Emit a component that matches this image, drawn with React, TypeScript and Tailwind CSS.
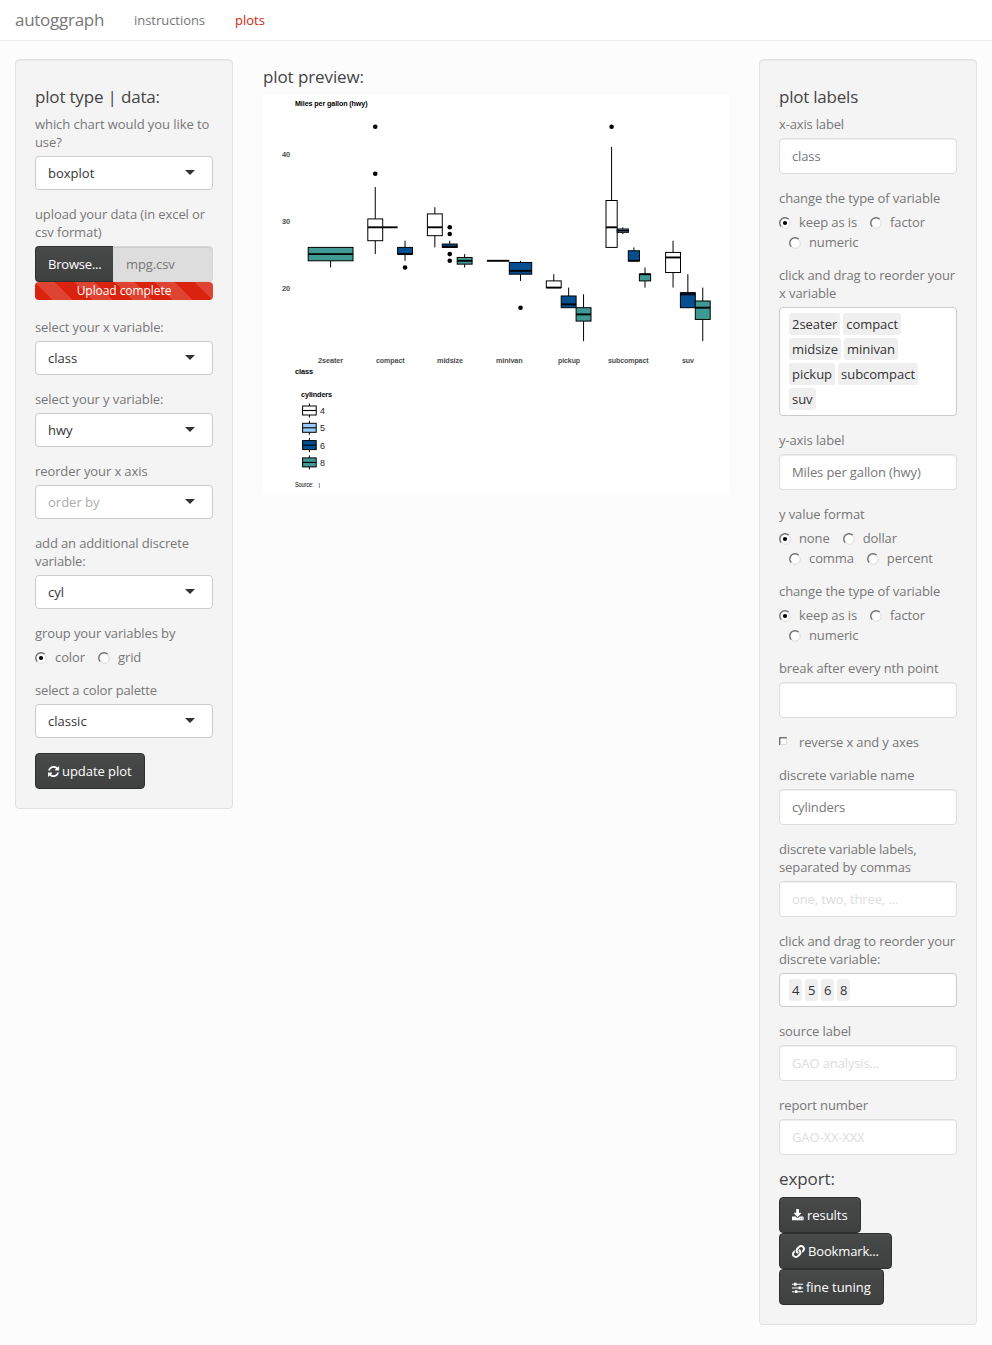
import type { ReactNode } from "react";
import { FaLink } from "react-icons/fa";

type Box = {
  x: number;
  w: number;
  min: number;
  q1: number;
  med: number;
  q3: number;
  max: number;
  fill: string;
  out?: number[];
};

const WHITE = "#ffffff";
const LIGHT = "#99ccff";
const BLUE = "#044f91";
const TEAL = "#409993";

const boxes: Box[] = [
  { x: 45.2, w: 44.8, min: 23, q1: 24, med: 25, q3: 26, max: 26, fill: TEAL },
  { x: 104.8, w: 14.9, min: 25, q1: 27, med: 29, q3: 30.25, max: 35, fill: WHITE, out: [37, 44] },
  { x: 119.7, w: 14.9, min: 29, q1: 29, med: 29, q3: 29, max: 29, fill: LIGHT },
  { x: 134.6, w: 14.9, min: 24, q1: 25, med: 25, q3: 26, max: 27, fill: BLUE, out: [23] },
  { x: 164.4, w: 14.9, min: 26, q1: 27.75, med: 29, q3: 31, max: 32, fill: WHITE },
  { x: 179.3, w: 14.9, min: 26, q1: 26, med: 26.1, q3: 26.5, max: 27, fill: BLUE, out: [24, 25, 28, 29] },
  { x: 194.2, w: 14.9, min: 23, q1: 23.5, med: 24, q3: 24.5, max: 25, fill: TEAL },
  { x: 223.9, w: 22.4, min: 24, q1: 24, med: 24, q3: 24, max: 24, fill: WHITE },
  { x: 246.3, w: 22.4, min: 21, q1: 22, med: 22.5, q3: 23.75, max: 24, fill: BLUE, out: [17] },
  { x: 283.3, w: 14.9, min: 20, q1: 20, med: 20, q3: 21, max: 22, fill: WHITE },
  { x: 298.2, w: 14.9, min: 17, q1: 17, med: 17.5, q3: 18.75, max: 20, fill: BLUE },
  { x: 313.1, w: 14.9, min: 12, q1: 15, med: 16, q3: 17, max: 19, fill: TEAL },
  { x: 343, w: 11.2, min: 26, q1: 26, med: 29, q3: 33, max: 41, fill: WHITE, out: [44] },
  { x: 354.2, w: 11.2, min: 28, q1: 28.25, med: 28.5, q3: 28.75, max: 29, fill: LIGHT },
  { x: 365.3, w: 11.2, min: 24, q1: 24, med: 24, q3: 25.5, max: 26, fill: BLUE },
  { x: 376.4, w: 11.2, min: 20, q1: 21, med: 22, q3: 22, max: 23, fill: TEAL },
  { x: 402.6, w: 14.9, min: 20, q1: 22.25, med: 24.5, q3: 25.25, max: 27, fill: WHITE },
  { x: 417.4, w: 14.9, min: 17, q1: 17, med: 19, q3: 19.25, max: 22, fill: BLUE },
  { x: 432.3, w: 14.9, min: 12, q1: 15.25, med: 17, q3: 18, max: 20, fill: TEAL },
];

const y = (v: number) => 132.3 - (v - 29) * 6.7;

const classes: [string, number, number][] = [
  ["2seater", 55, 25],
  ["compact", 113, 28.5],
  ["midsize", 174, 26],
  ["minivan", 233, 26.5],
  ["pickup", 295, 22],
  ["subcompact", 345, 40.5],
  ["suv", 419, 12],
];

const legend: [string, string][] = [
  ["4", WHITE],
  ["5", LIGHT],
  ["6", BLUE],
  ["8", TEAL],
];

function BoxPlot() {
  return (
    <svg width="466" height="400" viewBox="0 0 466 400" className="block bg-white" fontFamily="Liberation Sans, sans-serif">
      <text x="32" y="11" fontSize="7.2" fontWeight="bold" textLength="72.5" lengthAdjust="spacingAndGlyphs">Miles per gallon (hwy)</text>
      {[40, 30, 20].map((v) => (
        <text key={v} x="19" y={y(v) + 3.6} fontSize="6.6" fontWeight="bold" fill="#4d4d4d" textLength="8" lengthAdjust="spacingAndGlyphs">{v}</text>
      ))}
      {boxes.map((b, i) => {
        const cx = b.x + b.w / 2;
        return (
          <g key={i} stroke="#000" strokeWidth="1">
            {b.max > b.q3 && <path d={`M${cx} ${y(b.q3)}V${y(b.max)}`} />}
            {b.min < b.q1 && <path d={`M${cx} ${y(b.q1)}V${y(b.min)}`} />}
            <rect x={b.x} y={y(b.q3)} width={b.w} height={y(b.q1) - y(b.q3)} fill={b.fill} />
            <path d={`M${b.x} ${y(b.med)}h${b.w}`} strokeWidth="1.9" />
            {b.out?.map((o) => <circle key={o} cx={cx} cy={y(o)} r="2.3" stroke="none" />)}
          </g>
        );
      })}
      {classes.map(([name, x, w]) => (
        <text key={name} x={x} y="268" fontSize="6.8" fontWeight="bold" fill="#4d4d4d" textLength={w} lengthAdjust="spacingAndGlyphs">{name}</text>
      ))}
      <text x="32" y="279" fontSize="7.2" fontWeight="bold" textLength="18" lengthAdjust="spacingAndGlyphs">class</text>
      <text x="38" y="302" fontSize="7.2" fontWeight="bold" textLength="31" lengthAdjust="spacingAndGlyphs">cylinders</text>
      {legend.map(([label, fill], i) => {
        const cy = 315.5 + i * 17.3;
        return (
          <g key={label}>
            <path d={`M46.4 ${cy - 7}V${cy + 7}`} stroke="#000" />
            <rect x="39.6" y={cy - 4.5} width="13.6" height="9" fill={fill} stroke="#000" />
            <path d={`M39.6 ${cy}h13.6`} stroke="#000" strokeWidth="1.1" />
            <text x="57" y={cy + 3.5} fontSize="9.6" fill="#1a1a1a" textLength="4.9" lengthAdjust="spacingAndGlyphs">{label}</text>
          </g>
        );
      })}
      <text x="32" y="392" fontSize="6.8" textLength="18.500" lengthAdjust="spacingAndGlyphs">Source:</text>
      <text x="55.5" y="391.5" fontSize="6">|</text>
    </svg>
  );
}

const Heading = ({ children }: { children: ReactNode }) => (
  <h4 className="text-[17px] leading-[18px] text-[#444444]">{children}</h4>
);

function Field({ label, children }: { label: ReactNode; children: ReactNode }) {
  return (
    <div className="mb-[15px]">
      <div className="mb-[5px] whitespace-nowrap">{label}</div>
      {children}
    </div>
  );
}

function Select({ value, muted }: { value: string; muted?: boolean }) {
  return (
    <div className="flex h-[34px] items-center justify-between rounded border border-[#cccccc] bg-white pl-3 pr-[17px]">
      <span className={muted ? "tracking-normal text-[#acacac]" : "tracking-normal text-[#333333]"}>{value}</span>
      <svg width="10" height="5" viewBox="0 0 10 5" className="mb-[2px]"><path d="M0 0h10L5 5z" fill="#333" /></svg>
    </div>
  );
}

function Input({ value, placeholder }: { value?: string; placeholder?: string }) {
  return (
    <input
      defaultValue={value}
      placeholder={placeholder}
      className="block h-9 w-full rounded border border-[#dddddd] bg-white px-3 tracking-[-0.12px] text-[#777777] shadow-[inset_0_1px_1px_rgba(0,0,0,0.075)] outline-none placeholder:text-[#dddddd]"
    />
  );
}

function Radio({ label, checked }: { label: string; checked?: boolean }) {
  return (
    <label className="flex h-5 items-center">
      <svg width="12" height="12" viewBox="0 0 12 12" className="mr-2 mt-[1.500px] block">
        <circle cx="6" cy="6" r="5.5" fill="#fff" />
        <path d="M2.300 9.700A5 5 0 0 1 9.700 2.300" fill="none" stroke="#6e6e6e" strokeWidth="1.4" />
        <path d="M2.800 9.800A4.800 4.800 0 0 0 9.800 2.800" fill="none" stroke="#d4d4d4" strokeWidth="0.9" />
        {checked && <circle cx="6" cy="6" r="2.1" fill="#000" />}
      </svg>
      {label}
    </label>
  );
}

function RadioRows({ rows }: { rows: string[][] }) {
  return (
    <div className="-mb-px">
      {rows.map((row, i) => (
        <div key={i} className={i ? "ml-[10px] flex gap-[13px]" : "flex gap-[13px]"}>
          {row.map((r, j) => <Radio key={r} label={r} checked={!i && !j} />)}
        </div>
      ))}
    </div>
  );
}

function Tags({ rows }: { rows: string[][] }) {
  return (
    <div className="rounded border border-[#cccccc] bg-white px-[9px] pb-[2px] pt-[5px] tracking-[-0.03px] text-[#333333]">
      {rows.map((row) => (
        <div key={row[0]} className="mb-[3px] flex gap-[3px]">
          {row.map((t) => <span key={t} className={t.length === 1 ? "h-[22px] w-[13px] rounded-[3px] bg-[#efefef] px-[3px] leading-[22px]" : "h-[22px] rounded-[3px] bg-[#efefef] px-[3px] leading-[22px]"}>{t}</span>)}
        </div>
      ))}
    </div>
  );
}

function Button({ icon, children }: { icon: ReactNode; children: ReactNode }) {
  return (
    <button className="flex h-9 w-fit items-center whitespace-nowrap rounded border border-[#2e2f2f] bg-[linear-gradient(#4c4e4e,#474949_6%,#3f4141)] px-3 tracking-[-0.05px] text-white">
      {icon}
      {children}
    </button>
  );
}

const Glyph = ({ d }: { d: string }) => (
  <svg width="12" height="13" viewBox="128 0 1654 1792" fill="currentColor" className="mr-[2px] shrink-0"><path d={d} /></svg>
);

const REFRESH =
  "M1639 1056q0 5-1 7-64 268-268 434.5t-478 166.5q-146 0-282.500-55t-243.500-157l-129 129q-19 19-45 19t-45-19-19-45v-448q0-26 19-45t45-19h448q26 0 45 19t19 45-19 45l-137 137q71 66 161 102t187 36q134 0 250-65t186-179q11-17 53-117 8-23 30-23h192q13 0 22.500 9.500t9.500 22.500zm25-800v448q0 26-19 45t-45 19h-448q-26 0-45-19t-19-45 19-45l138-138q-148-137-349-137-134 0-250 65t-186 179q-11 17-53 117-8 23-30 23h-199q-13 0-22.500-9.500t-9.500-22.500v-7q65-268 270-434.500t480-166.500q146 0 284 55.500t245 156.500l130-129q19-19 45-19t45 19 19 45z";
const DOWNLOAD =
  "M1344 1344q0-26-19-45t-45-19-45 19-19 45 19 45 45 19 45-19 19-45zm256 0q0-26-19-45t-45-19-45 19-19 45 19 45 45 19 45-19 19-45zm128-224v320q0 40-28 68t-68 28h-1472q-40 0-68-28t-28-68v-320q0-40 28-68t68-28h465l135 136q58 56 136 56t136-56l136-136h464q40 0 68 28t28 68zm-325-569q17 41-14 70l-448 448q-18 19-45 19t-45-19l-448-448q-31-29-14-70 17-39 59-39h256v-448q0-26 19-45t45-19h256q26 0 45 19t19 45v448h256q42 0 59 39z";
const SLIDERS =
  "M480 1408v128h-352v-128h352zm352-128q26 0 45 19t19 45v256q0 26-19 45t-45 19h-256q-26 0-45-19t-19-45v-256q0-26 19-45t45-19h256zm160-384v128h-864v-128h864zm-640-512v128h-224v-128h224zm1312 1024v128h-736v-128h736zm-960-1152q26 0 45 19t19 45v256q0 26-19 45t-45 19h-256q-26 0-45-19t-19-45v-256q0-26 19-45t45-19h256zm640 512q26 0 45 19t19 45v256q0 26-19 45t-45 19h-256q-26 0-45-19t-19-45v-256q0-26 19-45t45-19h256zm320 128v128h-224v-128h224zm0-512v128h-864v-128h864z";

const Well = ({ children }: { children: ReactNode }) => (
  <div className="w-[218px] shrink-0 rounded border border-[#e2e2e2] bg-[#f4f4f4] px-[19px] pt-[28px] shadow-[inset_0_1px_1px_rgba(0,0,0,0.05)]">
    {children}
  </div>
);

export default function App() {
  return (
    <div className="min-h-[1345px] w-[992px] bg-[#fcfcfc] font-['Open_Sans',sans-serif] text-[13px] leading-[18px] tracking-[-0.1px] text-[#777777]">
      <nav className="flex h-[41px] items-center border-b border-[#eeeeee] bg-white pl-[15px]">
        <span className="w-[89px] text-[17px] tracking-[-0.27px]">autoggraph</span>
        <span className="ml-[30px] w-[71px] tracking-[-0.04px]">instructions</span>
        <span className="ml-[30px] tracking-normal text-[#d9230f]">plots</span>
      </nav>
      <main className="flex items-start px-[15px] pt-[18px]">
        <Well>
          <Heading><span className="tracking-[-0.18px]">plot type | data:</span></Heading>
          <div className="h-[9px]" />
          <Field label={<><span className="tracking-[-0.07px]">which chart would you like to</span><br />use?</>}><Select value="boxplot" /></Field>
          <div className="mb-[18px]">
            <div className="mb-[5px] whitespace-nowrap">upload your data (in excel or<br />csv format)</div>
            <div className="flex h-9">
              <button className="w-[78px] rounded-l border border-r-0 border-[#2e2f2f] bg-[linear-gradient(#4c4e4e,#474949_6%,#3f4141)] pl-3 text-left tracking-[-0.2px] text-white">Browse...</button>
              <div className="flex flex-1 items-center rounded-r border border-l-0 border-[#d8d8d8] bg-[#dddddd] pl-[13px] shadow-[inset_0_1px_1px_rgba(0,0,0,0.075)]">mpg.csv</div>
            </div>
            <div className="h-[18px] rounded bg-[#d9230f] bg-[linear-gradient(45deg,rgba(255,255,255,0.15)_25%,transparent_25%,transparent_50%,rgba(255,255,255,0.15)_50%,rgba(255,255,255,0.15)_75%,transparent_75%,transparent)] bg-[length:40px_40px] text-center text-[12px] tracking-[-0.07px] text-white">
              Upload complete
            </div>
          </div>
          <Field label="select your x variable:"><Select value="class" /></Field>
          <Field label="select your y variable:"><Select value="hwy" /></Field>
          <Field label="reorder your x axis"><Select value="order by" muted /></Field>
          <Field label={<><span className="tracking-[-0.13px]">add an additional discrete</span><br />variable:</>}><Select value="cyl" /></Field>
          <Field label="group your variables by"><RadioRows rows={[["color", "grid"]]} /></Field>
          <Field label={<span className="tracking-[-0.14px]">select a color palette</span>}><Select value="classic" /></Field>
          <Button icon={<Glyph d={REFRESH} />}>update plot</Button>
          <div className="h-[19px]" />
        </Well>

        <section className="ml-[30px] w-[466px] shrink-0 pt-[9px]">
          <Heading>plot preview:</Heading>
          <div className="mt-[9px]"><BoxPlot /></div>
        </section>

        <div className="ml-[30px]">
          <Well>
            <Heading><span className="tracking-[-0.22px]">plot labels</span></Heading>
            <div className="h-[9px]" />
            <Field label={<span className="tracking-[-0.16px]">x-axis label</span>}><Input value="class" /></Field>
            <Field label="change the type of variable"><RadioRows rows={[["keep as is", "factor"], ["numeric"]]} /></Field>
            <Field label={<><span className="tracking-[-0.13px]">click and drag to reorder your</span><br />x variable</>}>
              <Tags rows={[["2seater", "compact"], ["midsize", "minivan"], ["pickup", "subcompact"], ["suv"]]} />
            </Field>
            <Field label="y-axis label"><Input value="Miles per gallon (hwy)" /></Field>
            <Field label="y value format"><RadioRows rows={[["none", "dollar"], ["comma", "percent"]]} /></Field>
            <Field label="change the type of variable"><RadioRows rows={[["keep as is", "factor"], ["numeric"]]} /></Field>
            <Field label="break after every nth point"><Input /></Field>
            <label className="mb-[15px] flex h-[18px] items-center">
              <svg width="8" height="8" viewBox="0 0 8 8" className="mb-[2px] mr-3">
                <path d="M0 0h8v8H0z" fill="#fff" />
                <path d="M.75 8V.75H8" fill="none" stroke="#777" strokeWidth="1.5" />
                <path d="M1.500 7.500h6v-6" fill="none" stroke="#ddd" />
              </svg>
              <span className="tracking-[-0.14px]">reverse x and y axes</span>
            </label>
            <Field label="discrete variable name"><Input value="cylinders" /></Field>
            <Field label={<><span className="tracking-[-0.17px]">discrete variable labels,</span><br />separated by commas</>}><Input placeholder="one, two, three, ..." /></Field>
            <Field label={<><span className="tracking-[-0.13px]">click and drag to reorder your</span><br />discrete variable:</>}><Tags rows={[["4", "5", "6", "8"]]} /></Field>
            <Field label="source label"><Input placeholder="GAO analysis..." /></Field>
            <Field label="report number"><Input placeholder="GAO-XX-XXX" /></Field>
            <Heading>export:</Heading>
            <div className="h-[9px]" />
            <Button icon={<span className="mr-px"><Glyph d={DOWNLOAD} /></span>}>results</Button>
            <Button icon={<FaLink size={13} className="mr-[3px] shrink-0" />}><span className="tracking-[-0.15px]">Bookmark...</span></Button>
            <Button icon={<Glyph d={SLIDERS} />}>fine tuning</Button>
            <div className="h-[19px]" />
          </Well>
        </div>
      </main>
    </div>
  );
}
